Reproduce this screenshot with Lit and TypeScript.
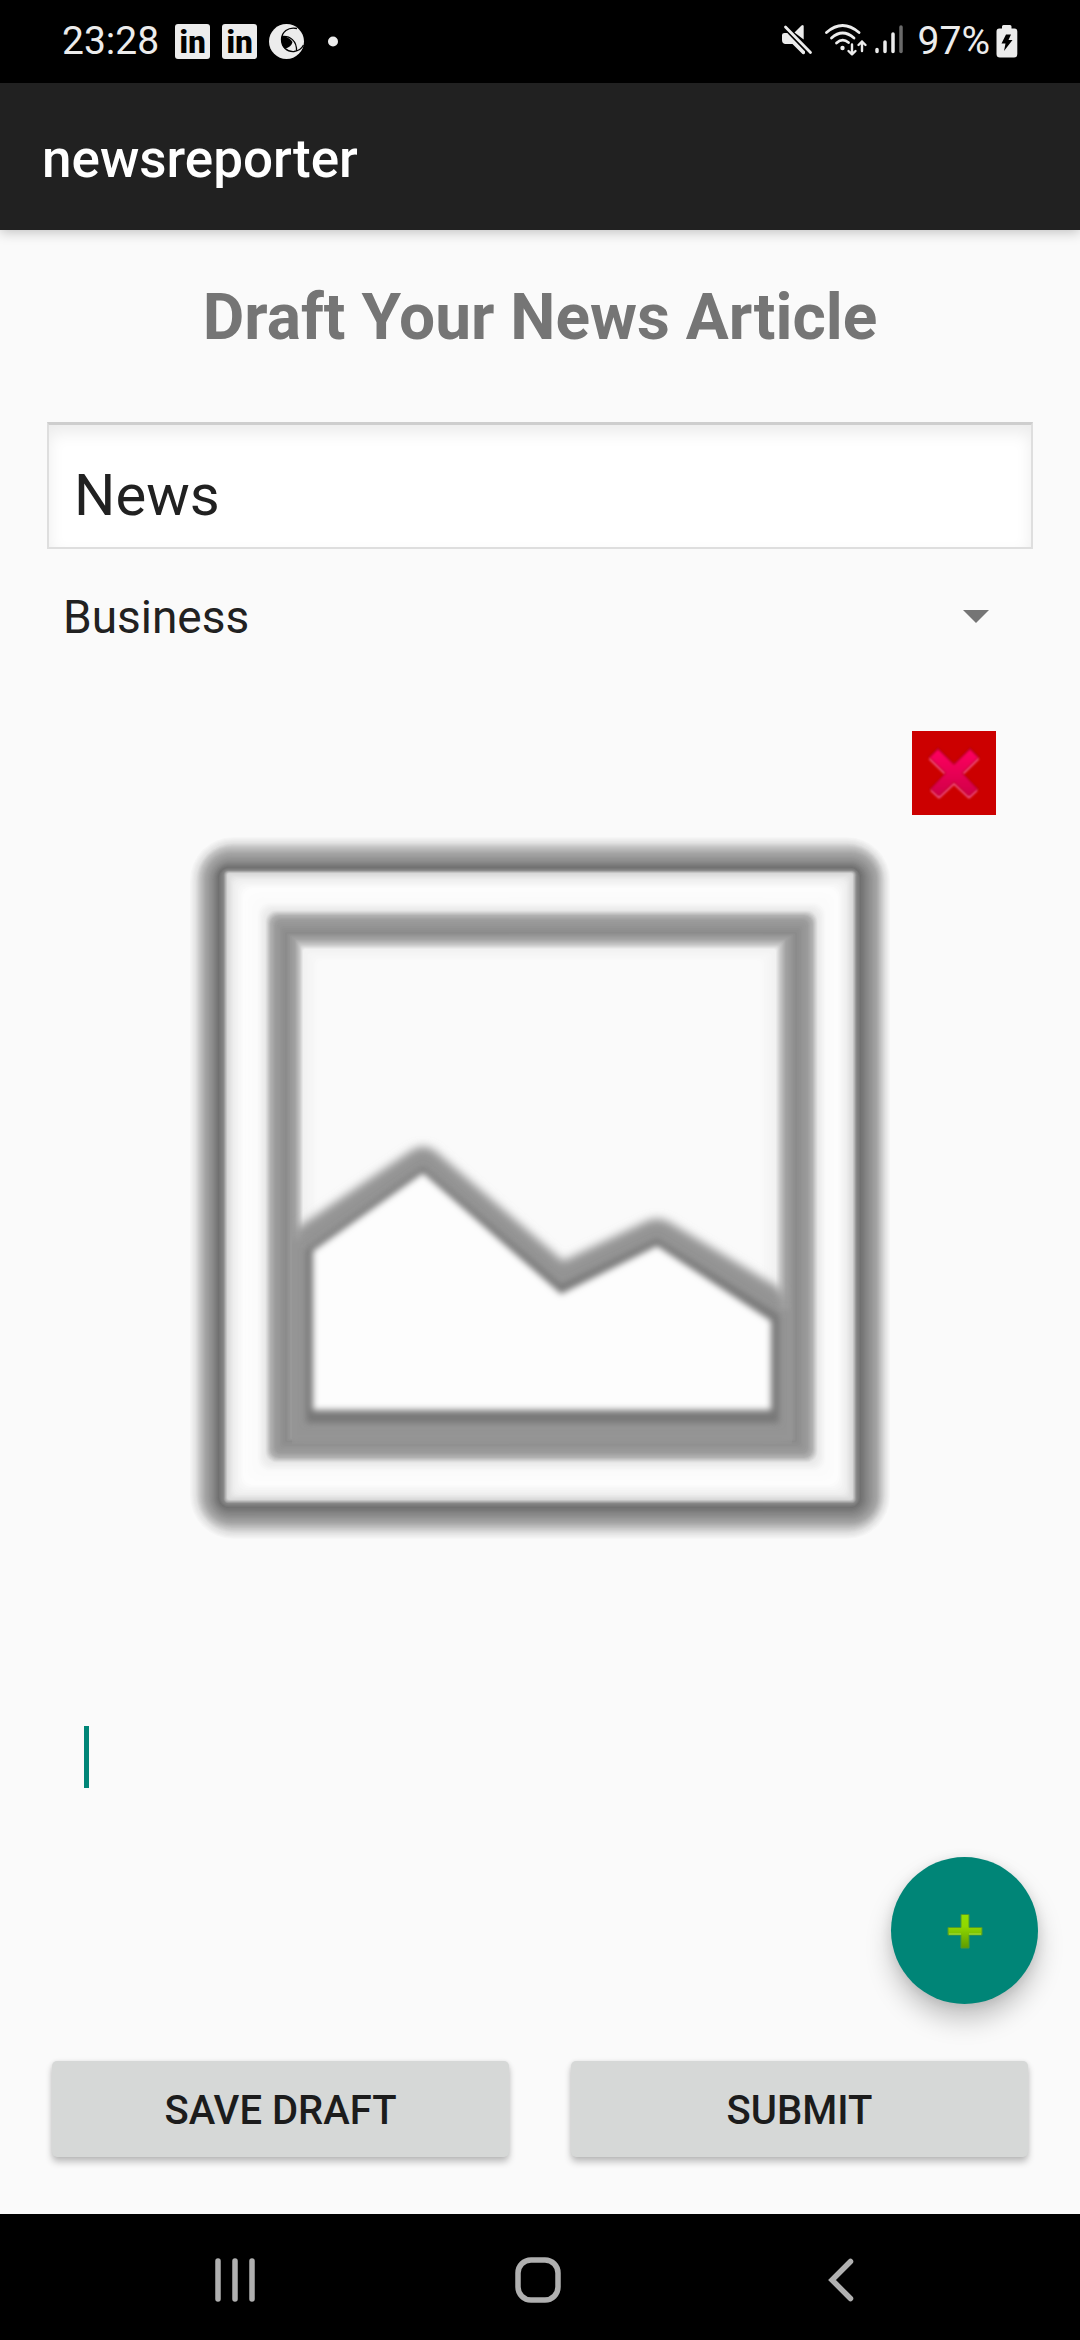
import { LitElement, html, css, svg } from "lit";
import { customElement, state } from "lit/decorators.js";

/* Contours of the placeholder frame, outermost first:
   left, top, right, bottom, corner radius, grey level. */
const CONTOURS: number[][] = [
  [189, 836, 891, 1540, 44, 250],
  [196, 843, 885, 1533, 38, 222],
  [200, 847, 881, 1528, 32, 194],
  [205, 853, 877, 1523, 27, 164],
  [212, 861, 869, 1516, 19, 139],
  [218, 867, 861, 1508, 11, 112],
  [223, 870, 857, 1504, 5, 133],
  [227, 873, 853, 1500, 3, 216],
  [233, 879, 847, 1495, 6, 238],
  [243, 888, 838, 1485, 10, 253],
  [257, 902, 826, 1472, 12, 250],
  [265, 910, 818, 1463, 11, 232],
  [270, 915, 813, 1458, 9, 178],
  [275, 920, 808, 1453, 6, 155],
  [285, 932, 797, 1442, 2, 139],
  [295, 939, 786, 1436, 1, 164],
  [300, 945, 780, 1433, 2, 204],
  [303, 949, 776, 1431, 3, 242],
  [317, 960, 762, 1420, 6, 250],
];

const STEPS = 6;

function blend(contours: number[][]): number[][] {
  const out: number[][] = [];
  for (let i = 0; i < contours.length - 1; i++) {
    for (let s = 0; s < STEPS; s++) {
      out.push(contours[i].map((v, k) => v + ((contours[i + 1][k] - v) * s) / STEPS));
    }
  }
  out.push(contours[contours.length - 1]);
  return out;
}

@customElement("picture-placeholder")
class PicturePlaceholder extends LitElement {
  static styles = css`
    :host {
      display: block;
    }
    .art {
      display: block;
      width: 100%;
      height: auto;
    }
  `;

  render() {
    return html`
      <svg class="art" viewBox="180 828 720 720" role="img" aria-label="Article picture">
        <defs>
          <filter id="soft" x="-10%" y="-10%" width="120%" height="120%">
            <feGaussianBlur stdDeviation="5" />
          </filter>
          <filter id="crisp" x="-10%" y="-10%" width="120%" height="120%">
            <feGaussianBlur stdDeviation="3" />
          </filter>
          <clipPath id="inner"><rect x="292" y="940" width="500" height="504" /></clipPath>
        </defs>
        ${blend(CONTOURS).map(([l, t, r, b, q, g]) => {
          const c = Math.round(g);
          return svg`<rect x=${l} y=${t} width=${r - l} height=${b - t} rx=${q} fill=${`rgb(${c},${c},${c})`} />`;
        })}
        <g clip-path="url(#inner)">
          <path
            filter="url(#soft)"
            fill="#949494"
            d="M294 1231 L300 1226 L412 1150 Q423 1143 434 1150 L563 1261 L647 1221 Q658 1216 669 1222 L779 1288 L786 1300 V1443 H294 Z"
          />
          <path
            filter="url(#crisp)"
            fill="#949494"
            d="M289 1240 L312 1240 V1421 H772 V1310 H795 V1443 H289 Z"
          />
          <path
            filter="url(#crisp)"
            fill="#787878"
            d="M306 1250 L423 1167 L561 1285 L657 1239 L779 1315 V1423 H306 Z"
          />
          <path
            filter="url(#crisp)"
            fill="#fdfdfd"
            d="M313 1251 L423 1173 L561 1294 L657 1246 L771 1321 V1410 H313 Z"
          />
        </g>
      </svg>
    `;
  }
}

@customElement("status-bar")
class StatusBar extends LitElement {
  static styles = css`
    :host {
      display: flex;
      align-items: center;
      justify-content: space-between;
      height: 82px;
      padding: 0 62px 1px;
      background: #000;
      color: #ececec;
      font: 400 39px/48px Roboto, sans-serif;
    }
    .group {
      display: flex;
      align-items: center;
    }
    .left {
      gap: 16px;
    }
    .notices {
      display: flex;
      gap: 12px;
    }
    .right {
      gap: 6px;
    }
    .icon {
      display: block;
      flex: none;
    }
    .badge {
      width: 35px;
      height: 35px;
      margin-top: 1px;
      border-radius: 3px;
      background: #ececec;
      color: #000;
      font: 900 31px/37px Roboto, sans-serif;
      text-align: center;
    }
  `;

  render() {
    return html`
      <div class="group left">
        <span>23:28</span>
        <div class="notices">
          <span class="badge">in</span>
          <span class="badge">in</span>
          <svg class="icon" width="36" height="36" viewBox="0 0 36 36" aria-hidden="true">
            <circle cx="17.500" cy="18.500" r="17.500" fill="#ececec" />
            <path d="M13 14 C17 13 21 15 23.500 19 C23 22 20 25 15.500 25.500 C12.500 22 11.800 17.500 13 14 Z" fill="#000" />
            <path
              d="M28 5.500 C19 3.500 12.500 9 12.500 16.500 C12.500 24 18 29 25 28.500 C29 28 32.500 26 34.500 22 M13 13.500 C21 12.500 28 18 27.500 28"
              fill="none" stroke="#000" stroke-width="1.300"
            />
          </svg>
          <svg class="icon" width="36" height="36" viewBox="0 0 36 36" aria-hidden="true">
            <circle cx="16" cy="18.500" r="5" fill="#ececec" />
          </svg>
        </div>
      </div>
      <div class="group right">
        <svg class="icon" width="36" height="36" viewBox="0 0 36 36" aria-hidden="true">
          <path d="M0 12 Q0 10 2.500 10 H8 L23 25.500 V30 Q22.500 32 20.500 31 L10.500 21 H3 Q0 20.500 0 17 Z" fill="#ececec" />
          <path d="M12.500 9.500 L19.500 2.500 Q21.700 1 21.700 3.500 V16.500 Z" fill="#ececec" />
          <path d="M3 4 L28.500 30.500" stroke="#000" stroke-width="5" />
          <path d="M3.500 4 L28.500 29.500" stroke="#ececec" stroke-width="2.800" stroke-linecap="round" />
        </svg>
        <svg class="icon" width="44" height="36" viewBox="0 0 44 36" aria-hidden="true">
          <g fill="none" stroke="#ececec" stroke-width="2.800" stroke-linecap="round">
            <path d="M2.500 9.500 Q18.500 -4.500 35 9.500" />
            <path d="M7.500 15 Q18.500 5 30 15" />
            <path d="M12.500 20 Q18.500 14.500 24.500 19.500" />
          </g>
          <circle cx="18.500" cy="25" r="2.200" fill="#ececec" />
          <g fill="none" stroke="#ececec" stroke-width="2.400" stroke-linecap="round" stroke-linejoin="round">
            <path d="M28 21.500 V31 M24.500 28 L28 31.300 L31.500 28" />
            <path d="M38 28 V18.500 M34.500 22 L38 18.500 L41.500 22" />
          </g>
        </svg>
        <svg class="icon" width="38" height="36" viewBox="0 0 38 36" aria-hidden="true">
          <g stroke-width="3.500" stroke-linecap="round" stroke="#ececec">
            <path d="M3 26.500 V28.500 M11 19 V28.500 M19 11 V28.500" />
            <path d="M27 4 V28.500" stroke="#6a6a6a" />
          </g>
        </svg>
        <span>97%</span>
        <svg class="icon" width="22" height="36" viewBox="0 0 22 36" aria-hidden="true">
          <path
            d="M6 5.500 V3.500 Q6 2 7.500 2 H14 Q15.500 2 15.500 3.500 V5.500 H18.500 Q21.300 5.500 21.300 8.500 V31 Q21.300 34.500 18 34.500 H4 Q.5 34.500 .5 31 V8.500 Q.5 5.500 3.300 5.500 Z"
            fill="#ececec"
          />
          <path d="M10 11.500 H15 L12.500 17 H16.500 L8 28 L9.500 20.500 H5.500 Z" fill="#000" />
        </svg>
      </div>
    `;
  }
}

@customElement("navigation-bar")
class NavigationBar extends LitElement {
  static styles = css`
    :host {
      display: grid;
      grid-template-columns: repeat(3, 1fr);
      height: 126px;
      padding: 0 88px 0 84px;
      background: #000;
    }
    .key {
      display: grid;
      place-items: center;
      padding: 6px 0 0;
      border: 0;
      background: none;
      color: #b0b0b0;
    }
    .glyph {
      fill: none;
      stroke: currentColor;
      stroke-linecap: round;
    }
  `;

  render() {
    return html`
      <button class="key" aria-label="Recent apps">
        <svg class="glyph" width="48" height="48" viewBox="0 0 48 48" stroke-width="5.500">
          <path d="M7 5 V43 M24 5 V43 M41 5 V43" />
        </svg>
      </button>
      <button class="key" aria-label="Home">
        <svg class="glyph" width="48" height="48" viewBox="0 0 48 48" stroke-width="5.500">
          <rect x="4" y="4" width="40" height="40" rx="13" />
        </svg>
      </button>
      <button class="key" aria-label="Back">
        <svg class="glyph" width="48" height="48" viewBox="0 0 48 48" stroke-width="5.500">
          <path d="M33.500 5.500 L15 24 L33.500 42.500" stroke-linejoin="miter" />
        </svg>
      </button>
    `;
  }
}

@customElement("app-root")
class AppRoot extends LitElement {
  @state() private headline = "News";
  @state() private category = "Business";

  static styles = css`
    :host {
      display: flex;
      flex-direction: column;
      min-height: 100vh;
      background: #fafafa;
      color: #212121;
      font-family: Roboto, sans-serif;
    }
    .appbar {
      position: relative;
      padding: 43px 42px 38px;
      background: #212121;
      color: #fff;
      font-size: 53px;
      font-weight: 500;
      line-height: 66px;
      box-shadow: 0 2px 12px rgba(0, 0, 0, 0.24);
    }
    .page {
      display: flex;
      flex: 1;
      flex-direction: column;
      padding: 50px 47px 57px;
    }
    .heading {
      margin: 0 0 66px;
      color: #757575;
      font-size: 64px;
      font-weight: 700;
      line-height: 76px;
      text-align: center;
    }
    .title {
      box-sizing: border-box;
      width: 100%;
      height: 127px;
      margin: 0;
      padding: 18px 25px 0;
      border: 2px solid #dedede;
      border-top: 3px solid #cecece;
      border-radius: 0;
      outline: 0;
      background: #fff;
      box-shadow: inset 0 8px 16px rgba(0, 0, 0, 0.08);
      color: #212121;
      font: 400 58px/68px Roboto, sans-serif;
    }
    .picker {
      position: relative;
      margin-top: 24px;
    }
    .category {
      display: block;
      width: 100%;
      height: 84px;
      padding: 4px 80px 0 16px;
      border: 0;
      outline: 0;
      appearance: none;
      background: none;
      color: #212121;
      font: 400 46px/54px Roboto, sans-serif;
    }
    .arrow {
      position: absolute;
      top: 37px;
      right: 44px;
      pointer-events: none;
    }
    .remove {
      display: block;
      align-self: flex-end;
      width: 84px;
      height: 84px;
      margin: 74px 37px 13px 0;
      padding: 0;
      border: 0;
      background: #cc0000;
    }
    .picture {
      align-self: center;
      width: 100%;
      max-width: 720px;
    }
    .body {
      box-sizing: border-box;
      display: block;
      flex: 1 0 120px;
      width: 100%;
      margin: 150px 0 0;
      padding: 26px 37px;
      border: 0;
      outline: 0;
      resize: none;
      color: #212121;
      font: 400 53px/66px Roboto, sans-serif;
      background: linear-gradient(#008577, #008577) 37px 28px / 5px 62px no-repeat;
    }
    .add {
      display: grid;
      place-items: center;
      align-self: flex-end;
      width: 147px;
      height: 147px;
      margin: 0 -5px 57px 0;
      padding: 0;
      border: 0;
      border-radius: 50%;
      background: #008577;
      box-shadow: 0 16px 26px rgba(0, 0, 0, 0.22), 0 2px 12px rgba(0, 0, 0, 0.1);
    }
    .actions {
      display: grid;
      grid-template-columns: 1fr 1fr;
      gap: 62px;
      padding: 0 5px;
    }
    .action {
      height: 96px;
      padding: 4px 0 0;
      border: 0;
      border-radius: 5px;
      background: #d6d8d7;
      box-shadow: 0 5px 7px rgba(0, 0, 0, 0.24), 0 0 4px rgba(0, 0, 0, 0.08);
      color: #1c1c1c;
      font: 500 40px/48px Roboto, sans-serif;
      text-transform: uppercase;
    }
    .glyph {
      display: block;
    }
  `;

  render() {
    return html`
      <status-bar></status-bar>
      <header class="appbar">newsreporter</header>
      <main class="page">
        <h1 class="heading">Draft Your News Article</h1>
        <input
          class="title"
          type="text"
          aria-label="Title"
          .value=${this.headline}
          @input=${(e: Event) => (this.headline = (e.target as HTMLInputElement).value)}
        />
        <div class="picker">
          <select
            class="category"
            aria-label="Category"
            @change=${(e: Event) => (this.category = (e.target as HTMLSelectElement).value)}
          >
            <option selected>${this.category}</option>
          </select>
          <svg class="arrow" width="26" height="13" viewBox="0 0 26 13" aria-hidden="true">
            <path d="M0 0 H26 L13 13 Z" fill="#757575" />
          </svg>
        </div>
        <button class="remove" aria-label="Remove picture">
          <svg class="glyph" width="84" height="84" viewBox="0 0 84 84" aria-hidden="true">
            <defs>
              <linearGradient id="pink" x1="0" y1="0" x2="0" y2="1">
                <stop offset="0" stop-color="#ff0060" />
                <stop offset="1" stop-color="#d00048" />
              </linearGradient>
              <filter id="haze"><feGaussianBlur stdDeviation=".8" /></filter>
            </defs>
            <path
              filter="url(#haze)"
              fill="#b8001c"
              d="M26 16 L42 32 L58 16 L68 26 L51 42 L67 58 L57 67 L42 52 L27 67 L17 58 L33 42 L16 26 Z"
            />
            <g filter="url(#haze)" stroke="#f65c8e" stroke-width="2" fill="none">
              <path d="M17.500 27.500 L33 42.500 M66.500 27.500 L51 42.500 M19 59 L27 66.500 L42 52.500 L57 66.500 L65 59" />
            </g>
            <path
              filter="url(#haze)"
              fill="url(#pink)"
              d="M26 18.500 L42 34 L58 18.500 L66 26.500 L50 42 L65 58 L57 65 L42 51 L27 65 L19 58 L34 42 L18 26.500 Z"
            />
          </svg>
        </button>
        <picture-placeholder class="picture"></picture-placeholder>
        <textarea class="body" aria-label="Article text"></textarea>
        <button class="add" aria-label="Add">
          <svg class="glyph" width="36" height="36" viewBox="0 0 36 36" aria-hidden="true">
            <defs>
              <linearGradient id="lime" x1="0" y1="0" x2="0" y2="1">
                <stop offset="0" stop-color="#92e000" />
                <stop offset=".35" stop-color="#90d800" />
                <stop offset="1" stop-color="#5e9c00" />
              </linearGradient>
            </defs>
            <path
              fill="url(#lime)"
              stroke="#4c9a30"
              stroke-width="1"
              stroke-linejoin="round"
              d="M14 1.500 H22 V14.500 H35 V22 H22 V35 H14 V22 H1 V14.500 H14 Z"
            />
            <path d="M2 21 H14 M22 21 H34" stroke="#9ad62c" stroke-width="1.500" />
          </svg>
        </button>
        <div class="actions">
          <button class="action">Save draft</button>
          <button class="action">Submit</button>
        </div>
      </main>
      <navigation-bar></navigation-bar>
    `;
  }
}
